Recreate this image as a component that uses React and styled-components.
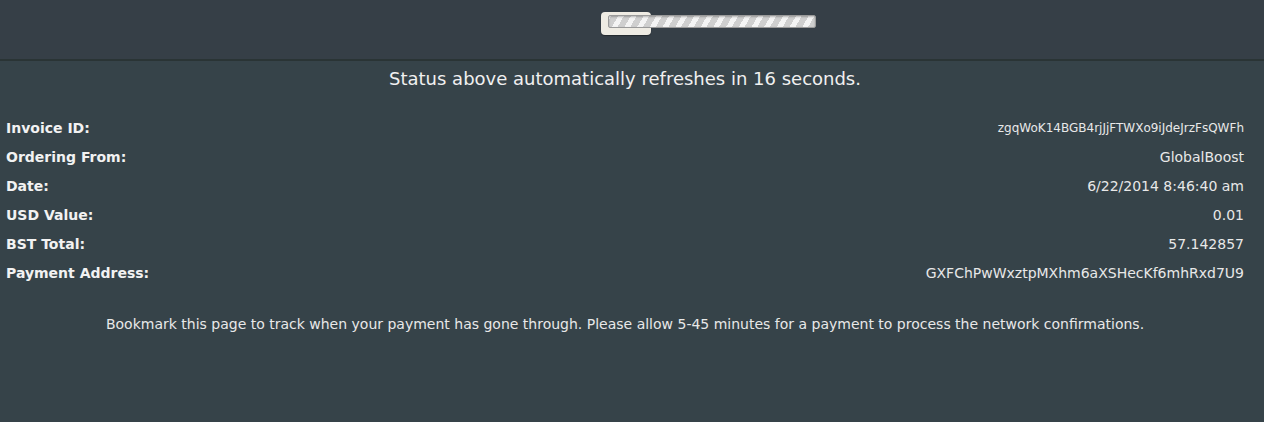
import styled, { createGlobalStyle } from "styled-components";

const GlobalStyle = createGlobalStyle`
  html, body {
    margin: 0;
    padding: 0;
    background: #364349;
    font-family: "DejaVu Sans", sans-serif;
  }
`;

const rows = [
  { label: "Invoice ID:", value: "zgqWoK14BGB4rjJjFTWXo9iJdeJrzFsQWFh", small: true },
  { label: "Ordering From:", value: "GlobalBoost" },
  { label: "Date:", value: "6/22/2014 8:46:40 am" },
  { label: "USD Value:", value: "0.01" },
  { label: "BST Total:", value: "57.142857" },
  { label: "Payment Address:", value: "GXFChPwWxztpMXhm6aXSHecKf6mhRxd7U9" },
];

export default function App() {
  return (
    <Page>
      <GlobalStyle />
      <Header>
        <Progress>
          <Handle />
          <Track />
        </Progress>
      </Header>

      <Content>
        <Status>Status above automatically refreshes in 16 seconds.</Status>

        <Details>
          {rows.map((row) => (
            <Row key={row.label}>
              <Label>{row.label}</Label>
              <Value small={row.small ? 1 : 0}>{row.value}</Value>
            </Row>
          ))}
        </Details>

        <Note>
          Bookmark this page to track when your payment has gone through. Please allow 5-45
          minutes for a payment to process the network confirmations.
        </Note>
      </Content>
    </Page>
  );
}

const Page = styled.div`
  min-height: 422px;
  background: #364349;
`;
const Header = styled.header`
  height: 61px;
  box-sizing: border-box;
  padding-top: 12px;
  display: flex;
  justify-content: center;
  background: #363f47;
  border-bottom: 2px solid #2a3435;
`;
const Progress = styled.div`
  position: relative;
  width: 215px;
  height: 24px;
  margin-left: 153px;
`;
const Handle = styled.div`
  position: absolute;
  left: 0;
  top: 0;
  width: 50px;
  height: 23px;
  border-radius: 4px;
  background: #efece4;
  box-shadow: 0 1px 1px rgba(0, 0, 0, 0.35);
`;
const Track = styled.div`
  position: absolute;
  left: 7px;
  top: 3px;
  width: 208px;
  height: 13px;
  box-sizing: border-box;
  border: 1px solid #9a9a9a;
  border-radius: 2px;
  background: repeating-linear-gradient(
    -60deg,
    #cfcfcf 0px,
    #cfcfcf 6px,
    #f4f4f4 6px,
    #f4f4f4 11px
  );
  box-shadow: inset 0 1px 2px rgba(0, 0, 0, 0.25);
`;
const Content = styled.main`
  padding: 7px 20px 0 6px;
  color: #eeeeee;
`;
const Status = styled.p`
  margin: 0;
  font-size: 18px;
  line-height: 22px;
  text-align: center;
  color: #f0f0f0;
`;
const Details = styled.div`
  margin-top: 23px;
  display: flex;
  flex-direction: column;
`;
const Row = styled.div`
  height: 29px;
  display: flex;
  align-items: center;
  justify-content: space-between;
`;
const Label = styled.span`
  font-size: 14px;
  font-weight: bold;
  color: #f2f2f2;
`;
const Value = styled.span`
  font-size: ${(props) => (props.small ? "12px" : "14px")};
  color: #e8e8e8;
`;
const Note = styled.p`
  margin: 27px 0 0;
  font-size: 14px;
  line-height: 20px;
  text-align: center;
  color: #e8e8e8;
`;
